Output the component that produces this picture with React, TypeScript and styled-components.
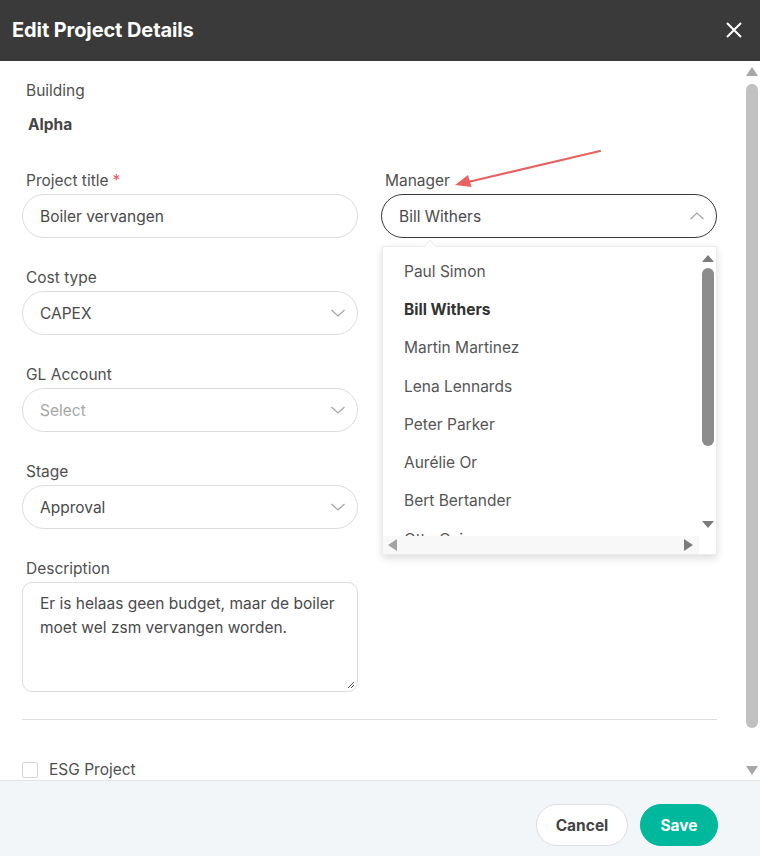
import * as React from 'react';
import styled, { createGlobalStyle } from 'styled-components';

const GlobalStyle = createGlobalStyle`
  html, body {
    margin: 0;
    padding: 0;
    background: #fff;
  }
  body {
    font-family: Inter, "Noto Sans", Arial, sans-serif;
    color: #4a4a4a;
  }
  * {
    box-sizing: border-box;
  }
`;

const Shell = styled.div`
  position: relative;
  width: 760px;
  height: 856px;
  display: flex;
  flex-direction: column;
  overflow: hidden;
`;

const Header = styled.header`
  height: 61px;
  flex: none;
  background: #3a3a3a;
  display: flex;
  align-items: center;
  justify-content: space-between;
  padding: 0 17px 2px 12px;
`;

const Title = styled.h1`
  margin: 0;
  color: #fff;
  font-size: 20px;
  font-weight: 700;
  letter-spacing: -0.1px;
`;

const CloseButton = styled.button`
  border: none;
  background: none;
  padding: 0;
  width: 18px;
  height: 18px;
  display: flex;
  cursor: pointer;
`;

const Body = styled.div`
  flex: 1;
  min-height: 0;
  display: flex;
  background: #fff;
`;

const Content = styled.div`
  flex: 1;
  min-width: 0;
  overflow: hidden;
  padding: 20px 27px 0 22px;
`;

const Label = styled.div`
  font-size: 15.5px;
  line-height: 20px;
  color: #505050;
  margin: 0 0 3px 4px;
`;

const Required = styled.span`
  color: #e35d5d;
  margin-left: 4px;
`;

const StaticValue = styled.div`
  font-size: 15.5px;
  line-height: 20px;
  font-weight: 700;
  color: #454545;
  margin: 14px 0 36px 6px;
`;

const FormGrid = styled.div`
  display: grid;
  grid-template-columns: 336px 336px;
  column-gap: 23px;
  align-items: start;
`;

const Column = styled.div`
  display: flex;
  flex-direction: column;
  gap: 30px;
`;

const Field = styled.div`
  position: relative;
`;

const Control = styled.div<{ $focused?: boolean; $placeholder?: boolean }>`
  height: 44px;
  border-radius: 22px;
  border: 1px solid ${p => (p.$focused ? '#3a3a3a' : '#dcdce3')};
  background: #fff;
  display: flex;
  align-items: center;
  justify-content: space-between;
  padding: 0 11px 0 17px;
  font-size: 15.5px;
  color: ${p => (p.$placeholder ? '#a8a8a8' : '#4a4a4a')};
`;

const TextArea = styled.div`
  position: relative;
  height: 110px;
  border-radius: 10px;
  border: 1px solid #dcdce3;
  padding: 9px 17px;
  font-size: 15.5px;
  line-height: 24px;
  color: #4a4a4a;
`;

const Grip = styled.svg`
  position: absolute;
  right: 2px;
  bottom: 2px;
`;

const Divider = styled.hr`
  margin: 27px 0 0;
  border: none;
  border-top: 1px solid #dedee2;
`;

const CheckRow = styled.label`
  display: flex;
  align-items: center;
  gap: 11px;
  margin-top: 40px;
  font-size: 15.5px;
  color: #505050;
`;

const Checkbox = styled.span`
  width: 16px;
  height: 16px;
  border: 1px solid #d4d4da;
  border-radius: 2px;
  background: #fff;
`;

/* fake scrollbars */
const ScrollColumn = styled.div<{ $width: number }>`
  width: ${p => p.$width}px;
  flex: none;
  display: flex;
  flex-direction: column;
  align-items: center;
`;

const Gap = styled.span<{ $h: number }>`
  height: ${p => p.$h}px;
  flex: none;
`;

const ArrowUp = styled.span<{ $color: string; $w: number; $h: number }>`
  width: 0;
  height: 0;
  border-left: ${p => p.$w / 2}px solid transparent;
  border-right: ${p => p.$w / 2}px solid transparent;
  border-bottom: ${p => p.$h}px solid ${p => p.$color};
`;

const ArrowDown = styled(ArrowUp)`
  border-bottom: none;
  border-top: ${p => p.$h}px solid ${p => p.$color};
`;

const ArrowLeft = styled.span<{ $color: string }>`
  width: 0;
  height: 0;
  border-top: 6px solid transparent;
  border-bottom: 6px solid transparent;
  border-right: 9px solid ${p => p.$color};
`;

const ArrowRight = styled(ArrowLeft)`
  border-right: none;
  border-left: 9px solid ${p => p.$color};
`;

const Thumb = styled.span<{ $color: string; $height: number; $top: number }>`
  width: 12px;
  height: ${p => p.$height}px;
  margin-top: ${p => p.$top}px;
  border-radius: 6px;
  background: ${p => p.$color};
`;

const Spacer = styled.span`
  flex: 1;
`;

/* manager menu */
const Menu = styled.div`
  position: absolute;
  top: calc(100% + 8px);
  left: 1px;
  width: 335px;
  height: 309px;
  background: #fff;
  border: 1px solid #ececf0;
  box-shadow: 0 3px 8px rgba(0, 0, 0, 0.14);
  display: grid;
  grid-template-columns: 1fr 17px;
  grid-template-rows: 1fr 18px;
  z-index: 2;

  &::before {
    content: '';
    position: absolute;
    top: -5px;
    left: 42px;
    width: 9px;
    height: 9px;
    background: #fff;
    border-top: 1px solid #ececf0;
    border-left: 1px solid #ececf0;
    transform: rotate(45deg);
  }
`;

const MenuList = styled.ul`
  list-style: none;
  margin: 0;
  padding: 5px 0 0;
  overflow: hidden;
`;

const MenuItem = styled.li<{ $selected?: boolean }>`
  height: 38.3px;
  display: flex;
  align-items: center;
  padding-left: 21px;
  font-size: 15.5px;
  font-weight: ${p => (p.$selected ? 700 : 400)};
  color: ${p => (p.$selected ? '#333' : '#555')};
`;

const HScroll = styled.div`
  background: #f8f8f8;
  display: flex;
  align-items: center;
  justify-content: space-between;
  padding: 0 6px 0 5px;
`;

const Footer = styled.footer`
  height: 76px;
  flex: none;
  background: #f3f6f9;
  border-top: 1px solid #e2e4e8;
  display: flex;
  justify-content: flex-end;
  align-items: flex-start;
  gap: 12px;
  padding: 23px 42px 0 0;
`;

const Button = styled.button<{ $primary?: boolean }>`
  height: 42px;
  min-width: ${p => (p.$primary ? 78 : 92)}px;
  border-radius: 21px;
  font-family: inherit;
  font-size: 15.5px;
  font-weight: 700;
  cursor: pointer;
  border: 1px solid ${p => (p.$primary ? '#00b89c' : '#dddde3')};
  background: ${p => (p.$primary ? '#00b89c' : '#fff')};
  color: ${p => (p.$primary ? '#fff' : '#444')};
`;

const Annotation = styled.svg`
  position: absolute;
  inset: 0;
  pointer-events: none;
  z-index: 5;
`;

const Chevron: React.FC<{ up?: boolean }> = ({ up }) => (
  <svg width="16" height="10" viewBox="0 0 16 10">
    <path
      d={up ? 'M1.5 8 L8 2 L14.5 8' : 'M1.5 2 L8 8 L14.5 2'}
      fill="none"
      stroke="#a5a5a5"
      strokeWidth="1.2"
    />
  </svg>
);

const managers = [
  'Paul Simon',
  'Bill Withers',
  'Martin Martinez',
  'Lena Lennards',
  'Peter Parker',
  'Aurélie Or',
  'Bert Bertander',
  'Otto Osinga',
];

export default function App() {
  return (
    <>
      <GlobalStyle />
      <Shell>
        <Header>
          <Title>Edit Project Details</Title>
          <CloseButton aria-label="Close">
            <svg width="18" height="18" viewBox="0 0 18 18">
              <path d="M2 2 L16 16 M16 2 L2 16" stroke="#fff" strokeWidth="2" />
            </svg>
          </CloseButton>
        </Header>

        <Body>
          <Content>
            <Label>Building</Label>
            <StaticValue>Alpha</StaticValue>

            <FormGrid>
              <Column>
                <Field>
                  <Label>
                    Project title<Required>*</Required>
                  </Label>
                  <Control>Boiler vervangen</Control>
                </Field>
                <Field>
                  <Label>Cost type</Label>
                  <Control>
                    CAPEX
                    <Chevron />
                  </Control>
                </Field>
                <Field>
                  <Label>GL Account</Label>
                  <Control $placeholder>
                    Select
                    <Chevron />
                  </Control>
                </Field>
                <Field>
                  <Label>Stage</Label>
                  <Control>
                    Approval
                    <Chevron />
                  </Control>
                </Field>
                <Field>
                  <Label>Description</Label>
                  <TextArea>
                    Er is helaas geen budget, maar de boiler moet wel zsm vervangen worden.
                    <Grip width="9" height="9" viewBox="0 0 9 9">
                      <path d="M8 2 L2 8 M8 5 L5 8" stroke="#555" strokeWidth="1" />
                    </Grip>
                  </TextArea>
                </Field>
              </Column>

              <Column>
                <Field>
                  <Label>Manager</Label>
                  <Control $focused>
                    Bill Withers
                    <Chevron up />
                  </Control>
                  <Menu>
                    <MenuList>
                      {managers.map(name => (
                        <MenuItem key={name} $selected={name === 'Bill Withers'}>
                          {name}
                        </MenuItem>
                      ))}
                    </MenuList>
                    <ScrollColumn $width={17}>
                      <Gap $h={8} />
                      <ArrowUp $color="#7c7c7c" $w={12} $h={7} />
                      <Thumb $color="#8c8c8c" $height={178} $top={6} />
                      <Spacer />
                      <ArrowDown $color="#7c7c7c" $w={12} $h={7} />
                      <Gap $h={8} />
                    </ScrollColumn>
                    <HScroll>
                      <ArrowLeft $color="#a3a3a3" />
                      <ArrowRight $color="#7c7c7c" />
                    </HScroll>
                    <span />
                  </Menu>
                </Field>
              </Column>
            </FormGrid>

            <Divider />

            <CheckRow>
              <Checkbox />
              ESG Project
            </CheckRow>
          </Content>

          <ScrollColumn $width={16}>
            <Gap $h={6} />
            <ArrowUp $color="#a8a8a8" $w={12} $h={9} />
            <Thumb $color="#c1c1c1" $height={644} $top={8} />
            <Spacer />
            <ArrowDown $color="#a8a8a8" $w={12} $h={9} />
            <Gap $h={5} />
          </ScrollColumn>
        </Body>

        <Footer>
          <Button>Cancel</Button>
          <Button $primary>Save</Button>
        </Footer>

        <Annotation width="760" height="856" viewBox="0 0 760 856">
          <line x1="600" y1="151" x2="468" y2="182" stroke="#e86262" strokeWidth="2.2" strokeLinecap="round" />
          <polygon points="455,185 471.5,187 468,175" fill="#e86262" />
        </Annotation>
      </Shell>
    </>
  );
}
